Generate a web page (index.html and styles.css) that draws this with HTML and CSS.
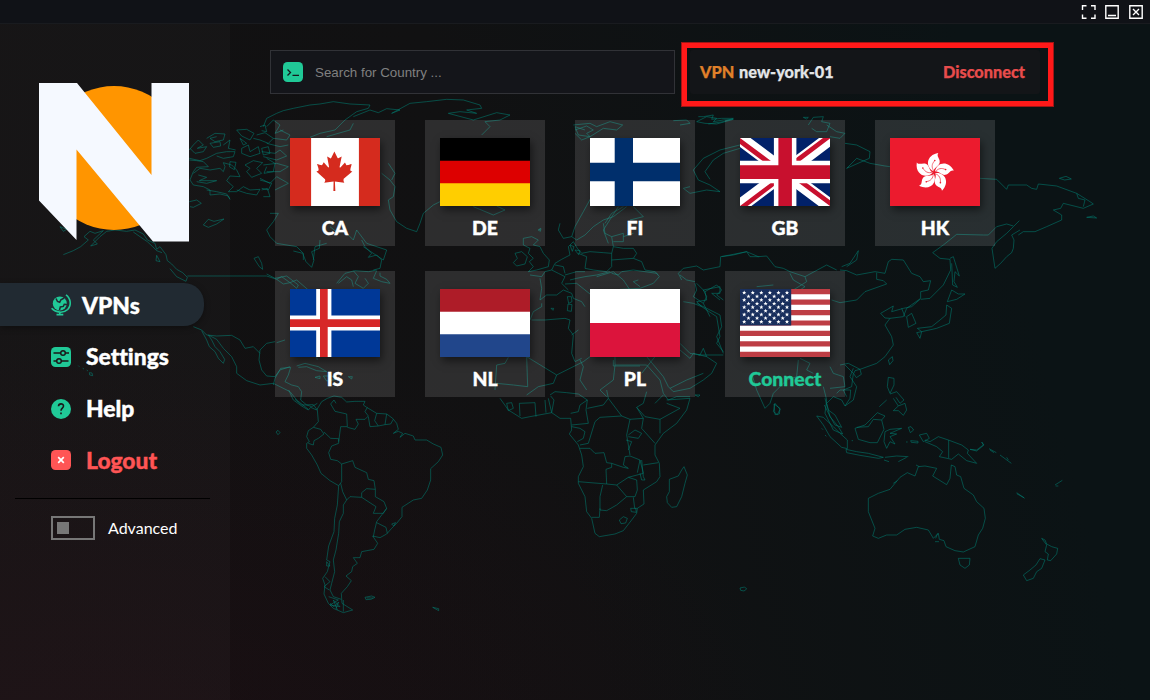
FILE: index.html
```html
<!DOCTYPE html>
<html lang="en">
<head>
<meta charset="utf-8">
<title>VPNs</title>
<link rel="stylesheet" href="styles.css">
</head>
<body>
<div class="app">
  <svg class="map" viewBox="0 0 1150 700" aria-hidden="true">
    <!-- Alaska, Canada, Mexico -->
    <g transform="translate(60 90) scale(.33333)">
      <path d="M10 494L40 482 62 470 85 450 72 440 90 424 105 430 130 422 100 450 112 462 92 468 120 440 140 424 165 420 200 424 225 420 250 432 262 450 285 460 290 478 300 470 318 494 322 512 335 522 350 538 368 548 382 562 378 574 350 560 330 536 M220 426L240 440 262 455 278 470 290 482 306 488 M290 496L300 515 288 512zM0 410L20 418 10 424zM382 558H620L650 568 665 560 690 578 710 570 745 600"/>
      <path d="M400 710L425 720 440 735 470 738 515 736 540 750 555 775 580 770 600 790M425 722L440 750 448 770 465 785 475 805 490 820 494 808 480 785 465 770 455 750 445 735 470 748 490 775 515 800 530 830 530 850 560 872 600 885 640 880M645 755L620 760 600 780 597 810 605 840 620 858 645 860 660 840 690 830M55 827L58 830M68 835l4 2M80 840l4 3M88 848l8 1 2 8-9-2z"/>
      <path d="M388 180L400 165 415 150 430 165 412 175 440 170 430 185 405 190 390 175M440 145L465 130 495 132 490 150 465 155 450 145 470 140M450 160L480 155 482 168 460 172zM388 205L420 212 440 205 470 190 500 185 525 185 520 200 490 205 470 198M490 165L510 150 505 175 527 180M388 210L410 212 430 215 445 230 410 232 400 245 390 270 400 285 430 290 450 300 450 315 480 312 505 318 510 328 500 312 470 305 440 300M415 255L440 262 418 272 470 272 440 280 410 275M400 250L420 235 450 240 480 235 490 245 495 230 490 218 515 225 530 240 540 260 510 258 500 272 520 290 505 305 530 305 550 290 570 300 600 298 590 315 560 310 530 300M388 335L410 330 424 340 400 352 390 350M430 405L445 388 462 394 492 387 470 402 445 412z"/>
      <path d="M530 120L560 118 582 130 570 150 545 138zM540 145L560 160 550 165zM545 175L565 165 570 185 595 170 600 190 570 200 545 190zM600 110L615 105 620 125 605 122M590 135L615 128 640 145 625 160 600 150 580 145M605 175L625 170 630 190 610 195zM555 225L580 212 608 218 590 235 605 250 575 262 560 245 570 235zM510 215l18 2-5 22-14-8zM620 205L645 220 640 245 612 250 620 230M600 270L635 280 625 300 605 295M610 110L620 85 650 70 670 62 700 55 750 45 780 42M620 110L640 90 660 105 645 130 670 120M582 505L595 500 605 520 608 538 598 530z"/>
    </g>
    <!-- Arctic islands and Greenland -->
    <g transform="translate(260 30) scale(.33333)">
      <path d="M180 222L220 215 270 222 330 225 325 235 290 245 255 270 225 300 180 310 150 322M60 300L90 315 80 330 40 325M20 340L60 350 85 345M5 365L45 370 60 360 80 378 50 390 10 380M10 405L50 400 85 410 60 425 20 425M0 445L30 460 50 440 85 460 45 480M5 480L22 475 30 500 10 500M280 280L270 300 200 320M280 260L330 240 355 248 380 236 420 240 395 250 450 220 500 215 560 208 610 210 660 225 665 235 620 240 650 250 600 245 565 250 640 270 710 248 750 255 720 270 675 275 690 290 665 315M365 430L390 450 405 470 400 500 385 510 390 540 410 575 440 595 470 605 480 580 490 550 520 525 540 515M640 530L700 555 735 540 710 528M30 550L55 550 40 575 20 600 30 620 50 640 110 650 130 670 130 690M200 640L165 650 160 690M210 590L235 610 250 600 280 630 290 600 320 640 380 660 370 690 310 650M385 400L405 430 395 450M835 600L842 595"/>
      <path d="M1100 530L1060 560 1030 570 1000 590 975 615 950 630 935 620 945 590 970 545 995 500 1025 480M1075 530L1030 600 1045 640M1120 530L1150 560 1110 570M940 285L990 280 1010 290 1050 275 1088 285 1070 300 1030 295 990 320 955 315 945 290 975 300M900 580L895 600 910 625 935 620"/>
    </g>
    <!-- Labrador, Great Lakes, Caribbean, West Africa -->
    <g transform="translate(230 240) scale(.33333)">
      <path d="M190 33L218 40 228 65 245 82 252 60 245 35 268 25 270 0M395 0L405 20 425 40 415 52 440 45 455 60 450 85 430 90M320 130L345 100 375 92 415 95 440 90M325 130L350 110 365 120 370 140M440 92L430 115 455 125 480 130 470 118 450 108 450 98M370 92L385 110 375 130 400 145 415 130 405 115M110 102L135 115 170 108 205 135 200 145M140 118L160 132 180 128 200 145"/>
      <path d="M130 430L180 455 200 480 235 508M140 308L165 300M130 435L135 415 152 385 182 382 175 405 165 425 185 435 205 440 215 455 212 480 230 495 245 500 262 490M200 378L225 370 265 380 290 395 260 392 230 380 205 382M255 412l15-4 0 8zM280 408l25 0 15 10-30 5zM355 410l12 0-2 7zM252 320L262 360"/>
      <path d="M795 450L800 375 825 370 835 352M890 350L893 440 850 435 800 430"/>
    </g>
    <!-- South America -->
    <g transform="translate(230 390) scale(.33333)">
      <path d="M176 0L190 30 215 48 235 60 242 52 260 60 275 35 292 25 312 18 335 22 350 36 375 34 405 34 400 45 410 52 440 70 470 72 488 85 500 100 505 118 490 130 505 124 518 130 510 142 525 130 550 138 555 150 590 150 610 162 633 172 638 195 625 215 602 236 602 270 592 300 575 325 550 330 516 352 516 380 500 400 485 415 470 432 450 443 428 438 443 460 432 478 395 485 390 503 370 503 382 520 368 530 365 545 348 558 364 572 352 590 334 610 336 640 368 660 340 668 310 655 295 640 282 612 285 585 278 565 292 545 300 515 290 510 296 468 312 425 314 385 322 345 326 287 300 272 273 250 262 225 245 195 230 175 230 160 238 155 230 140 235 122 250 112 265 95 262 60 250 44 215 45 195 28"/>
      <path d="M250 112L272 118 282 132 265 145 252 152 250 165 235 160M282 126L302 145 326 146 326 160 305 168 296 188 302 208 322 212 335 222 335 275 326 287M326 155L332 110 352 110 350 72 315 64 302 42 312 30 318 40M352 112L375 118 385 102 378 88 405 88 415 78 405 65 412 52M415 80L420 110 445 108 465 104 482 102 490 88M440 70L434 92 445 108M470 72L465 104M335 222L368 212 375 232 410 248 415 268 432 272 436 298 410 296 395 308 395 322 360 320 350 330 338 305 332 280M395 322L438 350 430 370 460 370 470 355 462 335 436 320 436 298M470 355L440 395 434 420 430 440M440 398L468 412 472 430M350 330L340 345 340 370 328 395 326 430 318 480 310 510 314 545 305 580 300 600 310 620 334 628M340 630V665M296 620L325 630 300 645 330 650 310 630 322 660M300 640l12 10 14-14-8 20M285 560L300 575 282 590 298 600M290 515L300 528 290 528zM405 622l20-4 10 4-12 6-15 1zM410 624h20M608 652l18 4 0 6zM485 402l12-4-6 10zM138 126l6-5 6 7-6 6z"/>
    </g>
    <!-- Europe, North Africa, Arabia, central Asia -->
    <g transform="translate(490 90) scale(.33333)">
      <path d="M145 420l8-4-2 8zM100 445L125 440 145 450 130 465 150 470 160 490 178 510 175 530 140 540 115 545 130 530 118 515 130 505 115 490 120 475 100 465zM75 490L95 485 112 500 105 522 80 528 70 518 82 505zM120 555L155 560 165 545 185 540 195 520 215 508 240 495 235 470 250 455 262 475 275 490 300 485 340 488 365 490M240 465l12 5-5 14zM255 480l15 2-4 12zM185 540L205 550 225 560 215 580 235 600M195 525l25 5 5 20M365 490L370 470 400 475 430 475 440 490 430 505 455 515 465 540 495 545 505 555M265 490L290 500 285 535 310 540 350 545 365 530 365 490M365 510L430 505M225 555L260 545 285 545M240 570L260 565 285 560 320 555 360 545M225 582L260 580 285 600 310 620M150 565L155 595 150 630 170 615 200 615 220 600 245 610 250 625 275 635 285 650M155 640L155 650 130 665 120 690M232 620l12 0 2 15-10 5zM234 642l12 2-2 20-12-2zM183 655l8 0-2 6z"/>
      <path d="M125 690L165 690 225 685 240 690 235 715 250 735 245 790 255 815 275 805M110 800L200 855 280 815 300 800M200 855L190 880 145 890 110 915M245 735L265 720M270 810L280 830 270 870 290 900M375 800L375 825 470 825M375 825L370 870 330 900 350 920M470 825L510 870 520 910 535 930 560 920 600 920M520 915L495 940M320 560L370 545 400 570 420 600M365 550L385 555 395 545 430 540 500 550 508 560 490 580 450 595 390 598M450 590L430 575 445 570"/>
      <path d="M570 760L600 790 630 795 640 775 650 800 680 820 665 850 640 870 600 895 550 905 535 890 520 860 470 800M540 895L590 870 640 850M625 795L700 795M580 635L610 640 635 650 680 680 690 740 680 760 700 785M575 570L565 550 580 535 620 528 640 540 690 530 692 500 720 495 770 485 780 500 808 500M615 580L620 600 610 620 640 640 650 620 640 600 690 590 690 610 665 610 690 630M570 555L590 570 615 575M640 640L660 680"/>
      <path d="M750 165L690 180 640 205 610 240 625 270 660 285 690 305 650 300 600 310 580 295 600 290M750 175L700 190 670 210 645 245 660 268M550 92L590 90 600 100 570 105M620 95L650 80 680 85 670 95 700 90 730 88 680 102 645 100zM255 120L290 108 310 120 290 130 300 140 275 150 255 130"/>
      <path d="M340 400L345 430 365 440 370 470M345 400L365 370 400 350M365 440L400 430 400 455 370 455M400 440L430 430"/>
    </g>
    <!-- Africa south -->
    <g transform="translate(500 380) scale(.33333)">
      <path d="M0 55L25 90 65 115 90 110 155 98 180 115 212 115 215 150 208 162 235 195 245 225 250 260 235 290 235 310 255 350 260 395 275 415 285 460 298 470 345 462 370 452 395 420 410 400 412 385 432 372 430 330 470 305 480 290 478 250 465 225 465 195 490 160 530 130 560 90 570 55 500 60M20 70L35 68 40 85 25 92zM60 108L58 70 105 68 108 110M135 60L138 98M145 55L155 98M150 45L165 35 200 38 235 42 262 60 240 75 235 95 212 100M155 98L162 60 152 48M262 60L258 90 265 130 215 135M262 85L310 75 325 55 365 108 300 112 285 125 265 190 240 195M215 140L240 145 255 155 250 175 232 185M325 55L320 30M365 108L390 118 430 115 410 82 430 70 440 35M410 82L435 110 480 118 540 85 500 70M480 118V160M430 115L425 145 465 190M390 118L380 165 390 225M385 165L405 150 425 160 415 175 385 170M378 180L395 185 385 210M240 205L270 205 285 220 312 218 320 248 335 250 370 262 385 265 370 255 375 230 390 228 420 240 430 280 385 292 350 315 320 312 235 305M320 312L318 268 335 262 335 250M420 240L412 278M425 240L430 290 435 300 425 300 420 280M430 255L475 248M350 315L380 350 405 350 412 330 410 300 385 292M308 315L300 350 300 390 320 392 350 375 380 350M300 385L298 412 275 412M400 352L404 385 412 385M392 385l15 0 2 12-15-2zM358 420l12-10 12 5-5 14-14 2zM552 260L562 285 555 310 545 350 530 380 515 382 502 368 500 350 508 335 508 298 535 288 545 270zM822 72L840 85 838 102 825 104zM720 624l14-3 6 6-8 6-10-2z"/>
    </g>
    <!-- Northern Siberia -->
    <g transform="translate(670 0) scale(.33333)">
      <path d="M85 350L100 350 130 345 125 358 155 355 190 355 160 365 115 372M400 352l15 0-5 5zM415 375L430 352 460 350 455 365 480 370 470 395 440 395 425 385M470 375L500 395 525 400 510 415 480 410M525 430L560 435 600 455 598 475 530 505 560 475 600 490 645 498 660 500M930 535L980 538 1010 568 1015 555 1070 555 1085 565 1100 568 1105 552 1160 558 1220 580 1260 605 1270 612 1240 625 1180 610 1172 625 1150 630 1175 645 1175 660 1130 680 1095 695 1060 695 1045 705M1220 580L1225 595 1245 600 1240 620M1168 535l20-6 16 8-20 3zM1250 652l20-4 10 6z"/>
    </g>
    <!-- Asia mainland -->
    <g transform="translate(560 240) scale(.33333)">
      <path d="M485 50L520 45 560 35 595 50 620 48 645 80 670 85 690 95 735 110 800 75 830 90M845 80L870 70 895 32 890 60 860 80M690 100L700 120 735 140 720 150M735 110L740 125 700 150M410 130L435 155 440 180 410 185 425 200M435 155L470 135 485 150 470 165 490 180M410 190L440 205 480 225 485 260 470 290 490 340M590 140L640 135M815 180L840 188M880 385L870 410 890 440 880 480 855 498 845 480 820 470 800 490 810 530 835 560 848 582 820 570 795 520 800 480 790 440M885 392l15-4 4 15-15 10-8-12zM855 375L880 400 875 440 850 450 860 470M810 380L820 400 850 410 855 440 810 445M575 400L590 450 615 505 630 490 640 460 680 420 710 410 715 360M645 490L660 508 652 524 640 515zM720 355L750 370 740 390 760 400"/>
      <path d="M160 360V378H240M285 350L245 400M360 330L390 355 400 340 440 350M405 465l15 0-5 5z"/>
    </g>
    <!-- East Asia -->
    <g transform="translate(840 90) scale(.33333)">
      <path d="M0 540L20 542 50 555 105 545 135 550 145 515 155 508 190 510 215 550 240 560 250 575 272 572 265 600 242 605 242 625 200 655 190 680 150 685 135 705 155 740 160 765 135 800 110 820 60 838 25 820 0 825M0 638L50 630 75 605 140 582 130 572 110 568 110 548M122 670L160 648 155 665 190 655 215 650 240 628M122 670L135 684 150 685M200 680L215 670 228 700 205 712zM185 655L195 680M350 433L430 435 445 435 470 410 500 402 520 408M350 433L310 465 278 488 300 505 330 508 332 540 310 585 270 625 242 628M330 505L340 500 358 558 345 545 342 575 352 592 338 585 335 520M335 600L355 612 375 612 350 628 322 635zM320 645L335 655 328 700 290 715 245 725 232 715 275 710 300 690 318 675zM230 728L245 725 240 745zM456 475L465 535 482 520 500 500 515 488 520 475 522 450 515 435 540 420M456 475L470 455 500 430 520 410 538 392M145 810l12-10 2 12-10 12z"/>
    </g>
    <!-- Southeast Asia and Oceania -->
    <g transform="translate(790 370) scale(.33333)">
      <path d="M80 138L100 142 130 170 150 190 172 210 172 236 155 232 120 200 100 165zM105 85L115 120 135 135 155 172 135 165 118 135 103 105M182 60L180 85 165 108M140 70L150 60 182 60M168 238L200 245 235 250 280 262 265 265 210 256 170 248zM285 262L320 258 355 260M282 270l15 5M325 275l25-13M95 175l4 4M105 195l4 4M185 212l4 0M195 175L225 165 262 128 285 138 275 150 282 178 262 218 240 218 205 208zM200 172L235 170 250 148 275 150M268 110L290 90M295 22L312 25 312 45 300 70 292 50zM300 72L320 65 342 90 330 100 318 82M310 85L325 108 345 100 350 120 340 136 325 122 310 122 325 108M285 185L300 178 335 175 300 190 320 192 300 200 315 222 300 215 290 235 282 215zM355 172l8-2 8 10-10 8zM348 216h5M362 212l22 2 0 5-20-2zM388 195L410 190 418 205 400 215zM405 210L420 215 445 200 475 210 515 225 535 240 532 250 560 280 530 272 505 252 485 268 448 260 458 245 440 230 405 215M476 210V264M540 238L560 240 580 225 575 216 582 225 560 243zM597 236l22 12M600 240l12 8M630 255l34 25M650 262l5 8M680 368l24 17M680 371l22 12M795 345l22-14M797 348l8 0"/>
      <path d="M484 285L495 290 500 315 512 320 522 355 550 375 560 395 582 415 586 445 578 475 565 495 555 530 520 546 495 542 468 530 462 512 448 508 445 490 430 505 415 480 380 472 345 478 320 495 290 495 265 505 248 498 255 475 235 425 235 385 265 370 300 358 330 322 352 308 375 318 385 290 405 288 440 295 428 318 470 344 480 325zM505 565L540 565 538 585 525 595 510 585zM435 515l12 0M437 505l6-15M378 285l10 5M310 340l12-8M755 505L765 510 770 522 785 530 803 535 800 552 782 572 772 570 775 552 765 545 770 525zM750 566L765 570 755 595 740 605 730 625 710 632 700 615 720 600 738 585z"/>
    </g>
  </svg>

  <header class="titlebar">
    <svg width="16" height="16" viewBox="0 0 16 16"><path d="M2.500 6V1.800h4M11 1.800h4V6M15 10.500v3.700h-4M6.500 14.200h-4v-3.700"/></svg>
    <svg width="16" height="16" viewBox="0 0 16 16"><path d="M1.800 1.800h12.400v12.400H1.800zM4 11.500h8"/></svg>
    <svg width="16" height="16" viewBox="0 0 16 16"><path d="M1.800 1.800h12.400v12.400H1.800zM5 5l6 6M11 5l-6 6"/></svg>
  </header>

  <div class="body">
    <aside class="sidebar">
      <svg class="logo" width="150" height="159" viewBox="0 0 150 159">
        <circle cx="75" cy="75" r="72" fill="#ff9500"/>
        <path fill="#f5f9ff" d="M0 0h38l74.500 92V0H150v158.500h-36L37.500 66.500V157L0 117.500z"/>
      </svg>
      <nav class="nav">
        <a class="nav-item active">
          <svg class="globe" width="22" height="22" viewBox="0 0 22 22">
            <circle cx="8.800" cy="9.500" r="7" fill="#20c997"/>
            <path d="M5 4.500l1.500 3 2.200.8 1.200-2.500 3.300-1.800M8.500 16l.8-3 3-.6 1-2.200 2.700.3" fill="none" stroke="#212a32" stroke-width="1.500"/>
            <path d="M15 .8c5 3.700 5.600 10.700 1.700 14.700C12.500 19.500 5 19 .6 14.200M8.800 17.800v2.500M5.500 20.600h6.800" fill="none" stroke="#20c997" stroke-width="1.600"/>
          </svg>
          <span>VPNs</span>
        </a>
        <a class="nav-item">
          <svg width="20" height="20" viewBox="0 0 20 20">
            <rect width="20" height="20" rx="4.500" fill="#20c997"/>
            <path d="M2.500 6h7M14.500 6h3.500M2.500 14H5M10.500 14h7" stroke="#1b1719" stroke-width="1.500"/>
            <circle cx="12" cy="6" r="2.300" fill="none" stroke="#1b1719" stroke-width="1.500"/>
            <circle cx="8" cy="14" r="2.300" fill="none" stroke="#1b1719" stroke-width="1.500"/>
          </svg>
          <span>Settings</span>
        </a>
        <a class="nav-item">
          <svg width="20" height="20" viewBox="0 0 20 20">
            <circle cx="10" cy="10" r="10" fill="#20c997"/>
            <path d="M7.500 7.300c.1-3.200 5-3.200 5-.2 0 2-2.500 2-2.500 4.600M10 13.600v1.600" fill="none" stroke="#1b1719" stroke-width="1.600"/>
          </svg>
          <span>Help</span>
        </a>
        <a class="nav-item danger">
          <svg width="20" height="20" viewBox="0 0 20 20">
            <rect width="20" height="20" rx="4.500" fill="#ff5555"/>
            <path d="M7.200 7.200l5.600 5.600M12.800 7.200l-5.600 5.600" stroke="#fff" stroke-width="1.700"/>
          </svg>
          <span>Logout</span>
        </a>
      </nav>
      <div class="divider"></div>
      <div class="advanced"><div class="toggle"><div class="knob"></div></div><span>Advanced</span></div>
    </aside>

    <main class="main">
      <div class="top">
        <div class="search">
          <svg width="20" height="20" viewBox="0 0 20 20">
            <rect width="20" height="20" rx="4.500" fill="#20c997"/>
            <path d="M4.500 7.500l3 3-3 3M9.500 13.300h6.500" fill="none" stroke="#15161b" stroke-width="1.300"/>
          </svg>
          <span>Search for Country ...</span>
        </div>
        <div class="frame">
          <div class="status">
            <span><b class="tag">VPN</b> new-york-01</span>
            <span class="disconnect">Disconnect</span>
          </div>
        </div>
      </div>

      <div class="grid">
        <div class="card">
          <svg class="flag" viewBox="0 0 640 480" preserveAspectRatio="none"><path fill="#fff" d="M0 0h640v480H0z"/><path fill="#d52b1e" d="M0 0h150v480H0zM490 0h150v480H490zM201 232l-13.300 4.400 61.400 54c4.700 13.700-1.600 17.800-5.600 25l66.600-8.400-1.600 67 13.900-.3-3.100-66.600 66.700 8c-4.100-8.700-7.800-13.300-4-27.200l61.300-51-10.700-4c-8.800-6.800 3.800-32.600 5.600-48.900 0 0-35.700 12.300-38 5.800l-9.200-17.500-32.600 35.800c-3.500.9-5-.5-5.900-3.500l15-74.800-23.800 13.400c-2 .9-4 .1-5.200-2.200l-23-46-23.600 47.800c-1.800 1.700-3.600 1.900-5 .7L264 130.800l13.700 74.100c-1.100 3-3.700 3.800-6.700 2.200l-31.200-35.300c-4 6.500-6.800 17.100-12.200 19.500-5.400 2.300-23.500-4.500-35.600-7 4.200 14.800 17 39.600 9 47.700z"/></svg>
          <span>CA</span>
        </div>
        <div class="card">
          <svg class="flag" viewBox="0 0 3 3" preserveAspectRatio="none"><path fill="#000" d="M0 0h3v3H0z"/><path fill="#d00" d="M0 1h3v2H0z"/><path fill="#ffce00" d="M0 2h3v1H0z"/></svg>
          <span>DE</span>
        </div>
        <div class="card">
          <svg class="flag" viewBox="0 0 90 68"><path fill="#fff" d="M0 0h90v68H0z"/><path fill="#002f6c" d="M0 24.700h90v18.500H0zM24.700 0H43v68H24.700z"/></svg>
          <span>FI</span>
        </div>
        <div class="card">
          <svg class="flag" viewBox="0 0 640 480" preserveAspectRatio="none"><path fill="#012169" d="M0 0h640v480H0z"/><path fill="#fff" d="M75 0l244 181L562 0h78v62L400 241l240 178v61h-80L320 301 81 480H0v-60l239-178L0 64V0z"/><path fill="#c8102e" d="M424 281l216 159v40L369 281zm-184 20l6 35L54 480H0zM640 0v3L391 191l2-44L590 0zM0 0l239 176h-60L0 42z"/><path fill="#fff" d="M241 0v480h160V0zM0 160v160h640V160z"/><path fill="#c8102e" d="M0 193v96h640v-96zM273 0v480h96V0z"/></svg>
          <span>GB</span>
        </div>
        <div class="card">
          <svg class="flag" viewBox="0 0 90 68">
            <defs><g id="petal"><path fill="#fff" d="M-.3-1.200C-9-5-8-17.500 4.300-19.500 2-16 6.300-14 5.700-10 5-6-.5-5-.3-1.200z"/><path d="M0-1.500C-3-5-2-9 .5-11.500" fill="none" stroke="#ec1b2e" stroke-width=".6"/><circle cx=".8" cy="-12" r=".8" fill="#ec1b2e"/></g></defs>
            <path fill="#ec1b2e" d="M0 0h90v68H0z"/>
            <g transform="translate(44 34.500)"><use href="#petal"/><use href="#petal" transform="rotate(72)"/><use href="#petal" transform="rotate(144)"/><use href="#petal" transform="rotate(216)"/><use href="#petal" transform="rotate(288)"/></g>
          </svg>
          <span>HK</span>
        </div>
        <div class="card">
          <svg class="flag" viewBox="0 0 90 68"><path fill="#003897" d="M0 0h90v68H0z"/><path fill="#fff" d="M0 26.400h90v15H0zM26.200 0h15.200v68H26.200z"/><path fill="#d72828" d="M0 30.200h90V38H0zM30 0h7.700v68H30z"/></svg>
          <span>IS</span>
        </div>
        <div class="card">
          <svg class="flag" viewBox="0 0 3 3" preserveAspectRatio="none"><path fill="#ae1c28" d="M0 0h3v3H0z"/><path fill="#fff" d="M0 1h3v2H0z"/><path fill="#21468b" d="M0 2h3v1H0z"/></svg>
          <span>NL</span>
        </div>
        <div class="card">
          <svg class="flag" viewBox="0 0 90 68"><path fill="#fff" d="M0 0h90v68H0z"/><path fill="#dc143c" d="M0 34h90v34H0z"/></svg>
          <span>PL</span>
        </div>
        <div class="card">
          <svg class="flag" viewBox="0 0 90 68">
            <defs>
              <path id="star" fill="#fff" d="M0-2.100l.6 1.400h1.500L.9.300l.5 1.600L0 1l-1.400.9.500-1.600-1.200-1h1.500z"/>
              <g id="six"><use href="#star" x="4.200"/><use href="#star" x="12.760"/><use href="#star" x="21.320"/><use href="#star" x="29.880"/><use href="#star" x="38.440"/><use href="#star" x="47"/></g>
              <g id="five"><use href="#star" x="8.480"/><use href="#star" x="17.040"/><use href="#star" x="25.600"/><use href="#star" x="34.160"/><use href="#star" x="42.720"/></g>
            </defs>
            <path fill="#fff" d="M0 0h90v68H0z"/>
            <path stroke="#bd3d44" stroke-width="5.230" d="M0 2.615h90M0 13.077h90M0 23.538h90M0 34h90M0 44.460h90M0 54.920h90M0 65.385h90"/>
            <path fill="#192f5d" d="M0 0h51.200v36.600H0z"/>
            <use href="#six" y="3.700"/><use href="#five" y="7.330"/><use href="#six" y="10.960"/><use href="#five" y="14.590"/><use href="#six" y="18.220"/><use href="#five" y="21.850"/><use href="#six" y="25.480"/><use href="#five" y="29.110"/><use href="#six" y="32.740"/>
          </svg>
          <span class="connect">Connect</span>
        </div>
      </div>
    </main>
  </div>
</div>
</body>
</html>
```

FILE: styles.css
```css
* { box-sizing: border-box; }
body {
  margin: 0;
  font-family: Lato, sans-serif;
  font-variant-ligatures: none;
  color: #fff;
}
.app {
  position: relative;
  width: 1150px;
  height: 700px;
  overflow: hidden;
  display: flex;
  flex-direction: column;
  background:
    radial-gradient(ellipse 720px 460px at 8% 112%, rgba(40, 12, 20, .4), rgba(40, 12, 20, 0)),
    linear-gradient(75deg, #121011 0%, #111112 45%, #0b1315 85%);
}
.map {
  position: absolute;
  inset: 0;
  width: 1150px;
  height: 700px;
  fill: none;
  stroke: rgba(0, 128, 116, .54);
  stroke-width: 3;
  stroke-linejoin: round;
}
.titlebar {
  position: relative;
  flex: none;
  height: 24px;
  display: flex;
  justify-content: flex-end;
  align-items: center;
  gap: 8px;
  padding-right: 6px;
  background: #101217;
  border-bottom: 1px solid #191b1f;
}
.titlebar svg { fill: none; stroke: #fff; stroke-width: 1.4; }
.body { position: relative; flex: 1; display: flex; min-height: 0; }
.sidebar { width: 230px; background: rgba(255, 255, 255, .024); }
.logo { display: block; margin: 59px 0 0 39px; }
.nav { display: flex; flex-direction: column; gap: 9px; margin-top: 41px; }
.nav-item {
  display: flex;
  align-items: center;
  gap: 15px;
  width: 204px;
  height: 43px;
  padding-left: 51px;
  font-size: 22.8px;
  font-weight: 900;
  -webkit-text-stroke: .4px currentColor;
}
.nav-item:not(.active) span { padding-bottom: 2px; }
.nav-item.active {
  gap: 9px;
  background: #212a32;
  border-radius: 0 20px 20px 0;
  box-shadow: 0 2px 6px rgba(0, 0, 0, .35);
}
.danger { color: #ff5555; }
.danger svg { margin-bottom: 1px; }
.divider { height: 1px; margin: 16px 20px 0 15px; background: #000; }
.advanced { display: flex; align-items: center; gap: 13px; margin: 17px 0 0 51px; font-size: 16px; }
.advanced span { padding-bottom: 2px; }
.toggle { width: 44px; height: 24px; padding: 4px; border: 2px solid #777; }
.knob { width: 12px; height: 12px; background: #777; }
.main { flex: 1; padding: 18px 0 0 40px; }
.top { display: flex; height: 66px; gap: 6px; }
.search {
  display: flex;
  align-items: center;
  gap: 12px;
  width: 405px;
  height: 44px;
  margin-top: 8px;
  padding-left: 12px;
  border: 1px solid #313237;
  background: #14151a;
  color: #808080;
  font: 13.333px "Liberation Sans", Arial, sans-serif;
}
.frame {
  width: 373px;
  height: 65px;
  padding: 2px 8px 3px 3px;
  border: 6px solid #ff1919;
  outline: 1px solid #a01515;
  outline-offset: -1px;
}
.status {
  display: flex;
  align-items: center;
  justify-content: space-between;
  height: 44px;
  padding: 0 15px 2px 10px;
  border-radius: 3px;
  background: #131518;
  color: #e4e6e8;
  font-size: 16.3px;
  font-weight: 900;
  word-spacing: 1px;
  -webkit-text-stroke: .25px currentColor;
}
.tag { font-weight: 900; color: #e0802a; }
.disconnect { color: #e84c4c; }
.grid {
  display: grid;
  grid-template-columns: repeat(5, 120px);
  column-gap: 30px;
  row-gap: 25px;
  padding: 12px 0 0 5px;
}
.card {
  display: flex;
  flex-direction: column;
  align-items: center;
  height: 126px;
  padding-top: 18px;
  background: rgba(255, 255, 255, .12);
  font-size: 19.4px;
  font-weight: 900;
  line-height: 24px;
  -webkit-text-stroke: .35px currentColor;
}
.card > span { margin-top: 10px; }
.flag { width: 90px; height: 68px; box-shadow: 2px 4px 8px rgba(0, 0, 0, .5); }
.connect { color: #20c997; }
```
